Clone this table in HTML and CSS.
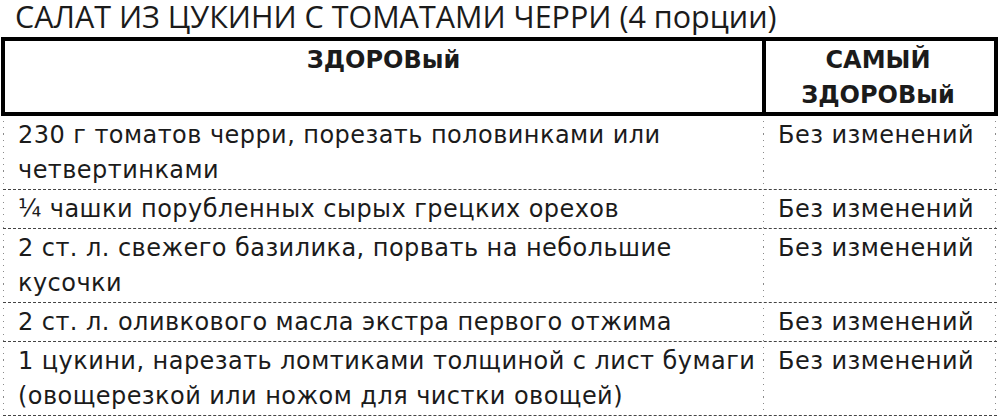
FILE: index.html
```html
<!DOCTYPE html>
<html lang="ru">
<head>
<meta charset="utf-8">
<title>Салат из цукини с томатами черри</title>
<link rel="stylesheet" href="styles.css">
</head>
<body>
<h1 class="title">САЛАТ ИЗ ЦУКИНИ С ТОМАТАМИ ЧЕРРИ (4 порции)</h1>
<div class="recipe">
  <div class="head">
    <div class="hcell hmain">ЗДОРОВый</div>
    <div class="hcell halt">САМЫЙ ЗДОРОВый</div>
  </div>
  <div class="row">
    <div class="cell ingr">230 г томатов черри, порезать половинками или четвертинками</div>
    <div class="cell alt">Без изменений</div>
  </div>
  <div class="row">
    <div class="cell ingr">¼ чашки порубленных сырых грецких орехов</div>
    <div class="cell alt">Без изменений</div>
  </div>
  <div class="row">
    <div class="cell ingr">2 ст. л. свежего базилика, порвать на небольшие кусочки</div>
    <div class="cell alt">Без изменений</div>
  </div>
  <div class="row">
    <div class="cell ingr">2 ст. л. оливкового масла экстра первого отжима</div>
    <div class="cell alt">Без изменений</div>
  </div>
  <div class="row">
    <div class="cell ingr">1 цукини, нарезать ломтиками толщиной с лист бумаги (овощерезкой или ножом для чистки овощей)</div>
    <div class="cell alt">Без изменений</div>
  </div>
</div>
</body>
</html>
```

FILE: styles.css
```css
html, body {
  margin: 0;
  padding: 0;
  background: #ffffff;
}

body {
  width: 1000px;
  height: 416px;
  overflow: hidden;
  font-family: "Open Sans", "Noto Sans", "DejaVu Sans", sans-serif;
  color: #1b1b1b;
}

.title {
  margin: 0;
  padding: 0 0 5px 15px;
  height: 32px;
  font-size: 30.5px;
  font-weight: 400;
  line-height: 32px;
  white-space: nowrap;
}

.recipe {
  display: flex;
  flex-direction: column;
}

.head {
  display: grid;
  grid-template-columns: 757px 228px;
  width: 989px;
  margin-left: 1px;
  border: 4px solid #000;
  height: 71px;
}

.hcell {
  font-family: "DejaVu Sans", sans-serif;
  font-weight: 700;
  font-size: 24px;
  line-height: 35px;
  text-align: center;
  padding-top: 2px;
}

.halt {
  border-left: 4px solid #000;
}

.row {
  display: grid;
  grid-template-columns: 760px 233px;
  width: 994px;
  margin-left: 3px;
  border-bottom: 1px dashed #444;
}

.cell {
  font-family: "DejaVu Sans", sans-serif;
  font-size: 24px;
  letter-spacing: 0.45px;
  line-height: 35px;
  padding: 2px 0 1px 14px;
  border-left: 1px solid transparent;
  border-image: repeating-linear-gradient(to bottom, #8a8a8a 0 1px, transparent 1px 6px) 1;
}

.alt {
  border-right: 1px solid transparent;
  padding-left: 14px;
  white-space: nowrap;
}
```
